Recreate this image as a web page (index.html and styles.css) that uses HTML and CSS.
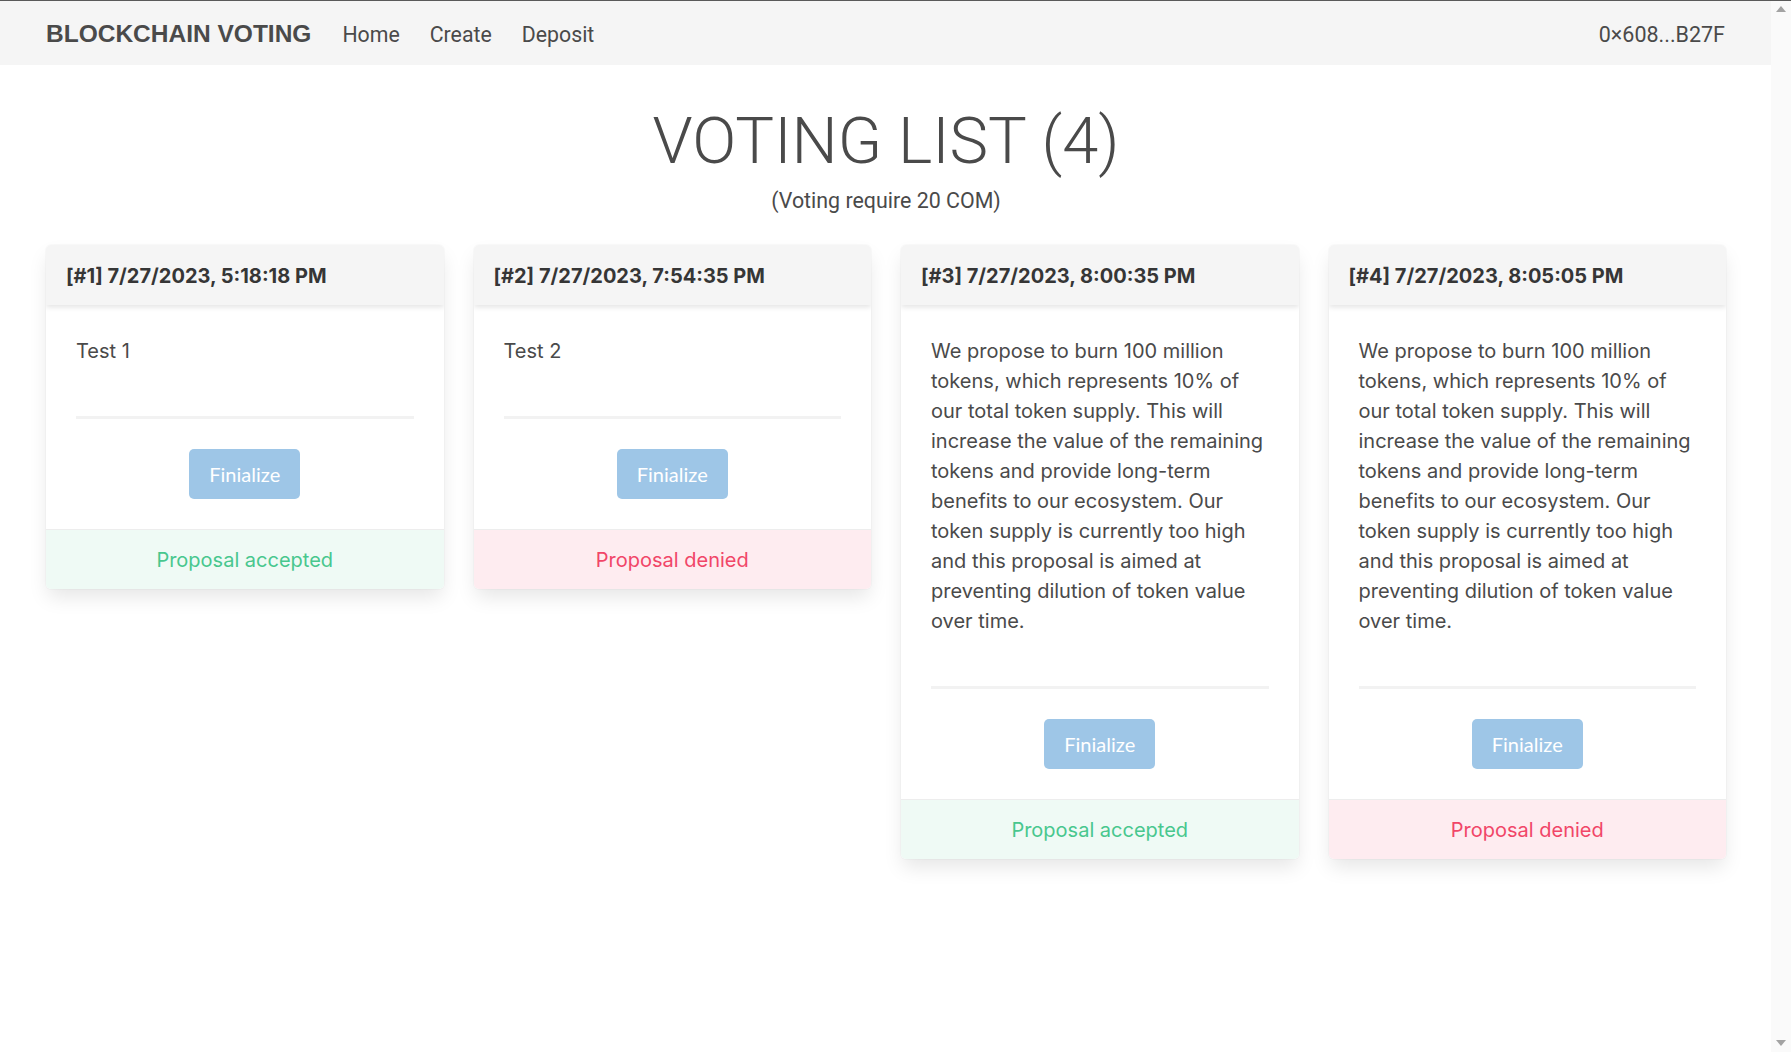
FILE: index.html
```html
<!DOCTYPE html>
<html lang="en">
<head>
<meta charset="utf-8">
<title>Blockchain Voting</title>
<link rel="stylesheet" href="styles.css">
</head>
<body>
<div class="window">
  <div class="page">
    <nav class="navbar">
      <div class="nav-left">
        <a class="brand" href="#">BLOCKCHAIN VOTING</a>
        <a class="nav-link" href="#">Home</a>
        <a class="nav-link" href="#">Create</a>
        <a class="nav-link" href="#">Deposit</a>
      </div>
      <div class="address">0×608...B27F</div>
    </nav>
    <main class="main">
      <h1 class="title">VOTING LIST (4)</h1>
      <p class="subtitle">(Voting require 20 COM)</p>
      <div class="cards">
        <div class="card">
          <header class="card-header">[#1] 7/27/2023, 5:18:18 PM</header>
          <div class="card-content">
            <p class="desc">Test 1</p>
            <hr class="sep">
            <div class="actions"><button class="btn" disabled>Finialize</button></div>
          </div>
          <footer class="card-footer accepted">Proposal accepted</footer>
        </div>
        <div class="card">
          <header class="card-header">[#2] 7/27/2023, 7:54:35 PM</header>
          <div class="card-content">
            <p class="desc">Test 2</p>
            <hr class="sep">
            <div class="actions"><button class="btn" disabled>Finialize</button></div>
          </div>
          <footer class="card-footer denied">Proposal denied</footer>
        </div>
        <div class="card">
          <header class="card-header">[#3] 7/27/2023, 8:00:35 PM</header>
          <div class="card-content">
            <p class="desc">We propose to burn 100 million tokens, which represents 10% of our total token supply. This will increase the value of the remaining tokens and provide long-term benefits to our ecosystem. Our token supply is currently too high and this proposal is aimed at preventing dilution of token value over time.</p>
            <hr class="sep">
            <div class="actions"><button class="btn" disabled>Finialize</button></div>
          </div>
          <footer class="card-footer accepted">Proposal accepted</footer>
        </div>
        <div class="card">
          <header class="card-header">[#4] 7/27/2023, 8:05:05 PM</header>
          <div class="card-content">
            <p class="desc">We propose to burn 100 million tokens, which represents 10% of our total token supply. This will increase the value of the remaining tokens and provide long-term benefits to our ecosystem. Our token supply is currently too high and this proposal is aimed at preventing dilution of token value over time.</p>
            <hr class="sep">
            <div class="actions"><button class="btn" disabled>Finialize</button></div>
          </div>
          <footer class="card-footer denied">Proposal denied</footer>
        </div>
      </div>
    </main>
  </div>
  <div class="scrollbar">
    <span class="arrow-up"></span>
    <span class="arrow-down"></span>
  </div>
</div>
</body>
</html>
```

FILE: styles.css
```css
* { box-sizing: border-box; }

html, body {
  margin: 0;
  padding: 0;
  background: #ffffff;
}

body {
  font-family: "Inter", "Roboto", sans-serif;
  color: #4a4a4a;
}

.window {
  display: flex;
  height: 1052px;
  border-top: 1px solid #5a5a5a;
  overflow: hidden;
}

.page {
  flex: 1;
  min-width: 0;
}

/* navbar */
.navbar {
  height: 64px;
  background: #f5f5f5;
  display: flex;
  align-items: center;
  justify-content: space-between;
  padding: 2px 46px 0 46px;
}

.nav-left {
  display: flex;
  align-items: center;
  gap: 30px;
}

.brand {
  font-family: "Liberation Sans", Arial, sans-serif;
  font-weight: 700;
  font-size: 24.5px;
  color: #4a4a4a;
  text-decoration: none;
  margin-right: 1px;
}

.nav-link {
  font-family: "Roboto", sans-serif;
  font-size: 21.3px;
  color: #4a4a4a;
  text-decoration: none;
}

.address {
  font-family: "Roboto", sans-serif;
  font-size: 21.5px;
  color: #4a4a4a;
}

/* main */
.main {
  padding: 44px 45px 0 46px;
}

.title {
  margin: 0;
  text-align: center;
  font-family: "Roboto", sans-serif;
  font-weight: 300;
  font-size: 65px;
  line-height: 64px;
  color: #4a4a4a;
}

.subtitle {
  margin: 13px 0 0;
  text-align: center;
  font-family: "Roboto", sans-serif;
  font-size: 21.4px;
  line-height: 30px;
  color: #4a4a4a;
}

.cards {
  margin-top: 29px;
  display: grid;
  grid-template-columns: repeat(4, 1fr);
  gap: 30px;
  align-items: start;
}

.card {
  background: #ffffff;
  border-radius: 5px;
  box-shadow: 0 10px 20px -2.5px rgba(10, 10, 10, 0.1), 0 0 0 1px rgba(10, 10, 10, 0.02);
  overflow: hidden;
}

.card-header {
  position: relative;
  background: #f5f5f5;
  padding: 16px 20px 14px;
  font-family: "Inter", sans-serif;
  font-weight: 700;
  font-size: 20px;
  line-height: 30px;
  color: #363636;
  box-shadow: 0 2.5px 5px rgba(10, 10, 10, 0.1);
}

.card-content {
  padding: 31px 30px 30px;
}

.desc {
  margin: 0;
  font-family: "Inter", sans-serif;
  font-size: 20px;
  line-height: 30px;
  color: #4a4a4a;
}

.sep {
  border: none;
  height: 3px;
  background: #f2f2f2;
  margin: 50px 0 30px;
}

.actions {
  display: flex;
  justify-content: center;
}

.btn {
  width: 111px;
  height: 50px;
  border: none;
  border-radius: 5px;
  background: #9ec6e7;
  color: #ffffff;
  font-family: "Lato", sans-serif;
  font-size: 20px;
  padding: 0;
  cursor: not-allowed;
}

.card-footer {
  border-top: 1px solid #ededed;
  padding: 14.5px;
  text-align: center;
  font-family: "Inter", sans-serif;
  font-size: 20px;
  line-height: 30px;
}

.card-footer.accepted {
  background: #effaf5;
  color: #48c78e;
}

.card-footer.denied {
  background: #feecf0;
  color: #f14668;
}

/* faux scrollbar */
.scrollbar {
  width: 20px;
  flex: none;
  background: #fafafa;
  display: flex;
  flex-direction: column;
  justify-content: space-between;
  align-items: center;
  padding: 5px 0 6px;
}

.arrow-up {
  width: 0;
  height: 0;
  border-left: 5.5px solid transparent;
  border-right: 5.5px solid transparent;
  border-bottom: 6px solid #a3a3a3;
}

.arrow-down {
  width: 0;
  height: 0;
  border-left: 5.5px solid transparent;
  border-right: 5.5px solid transparent;
  border-top: 6px solid #a3a3a3;
}
```
